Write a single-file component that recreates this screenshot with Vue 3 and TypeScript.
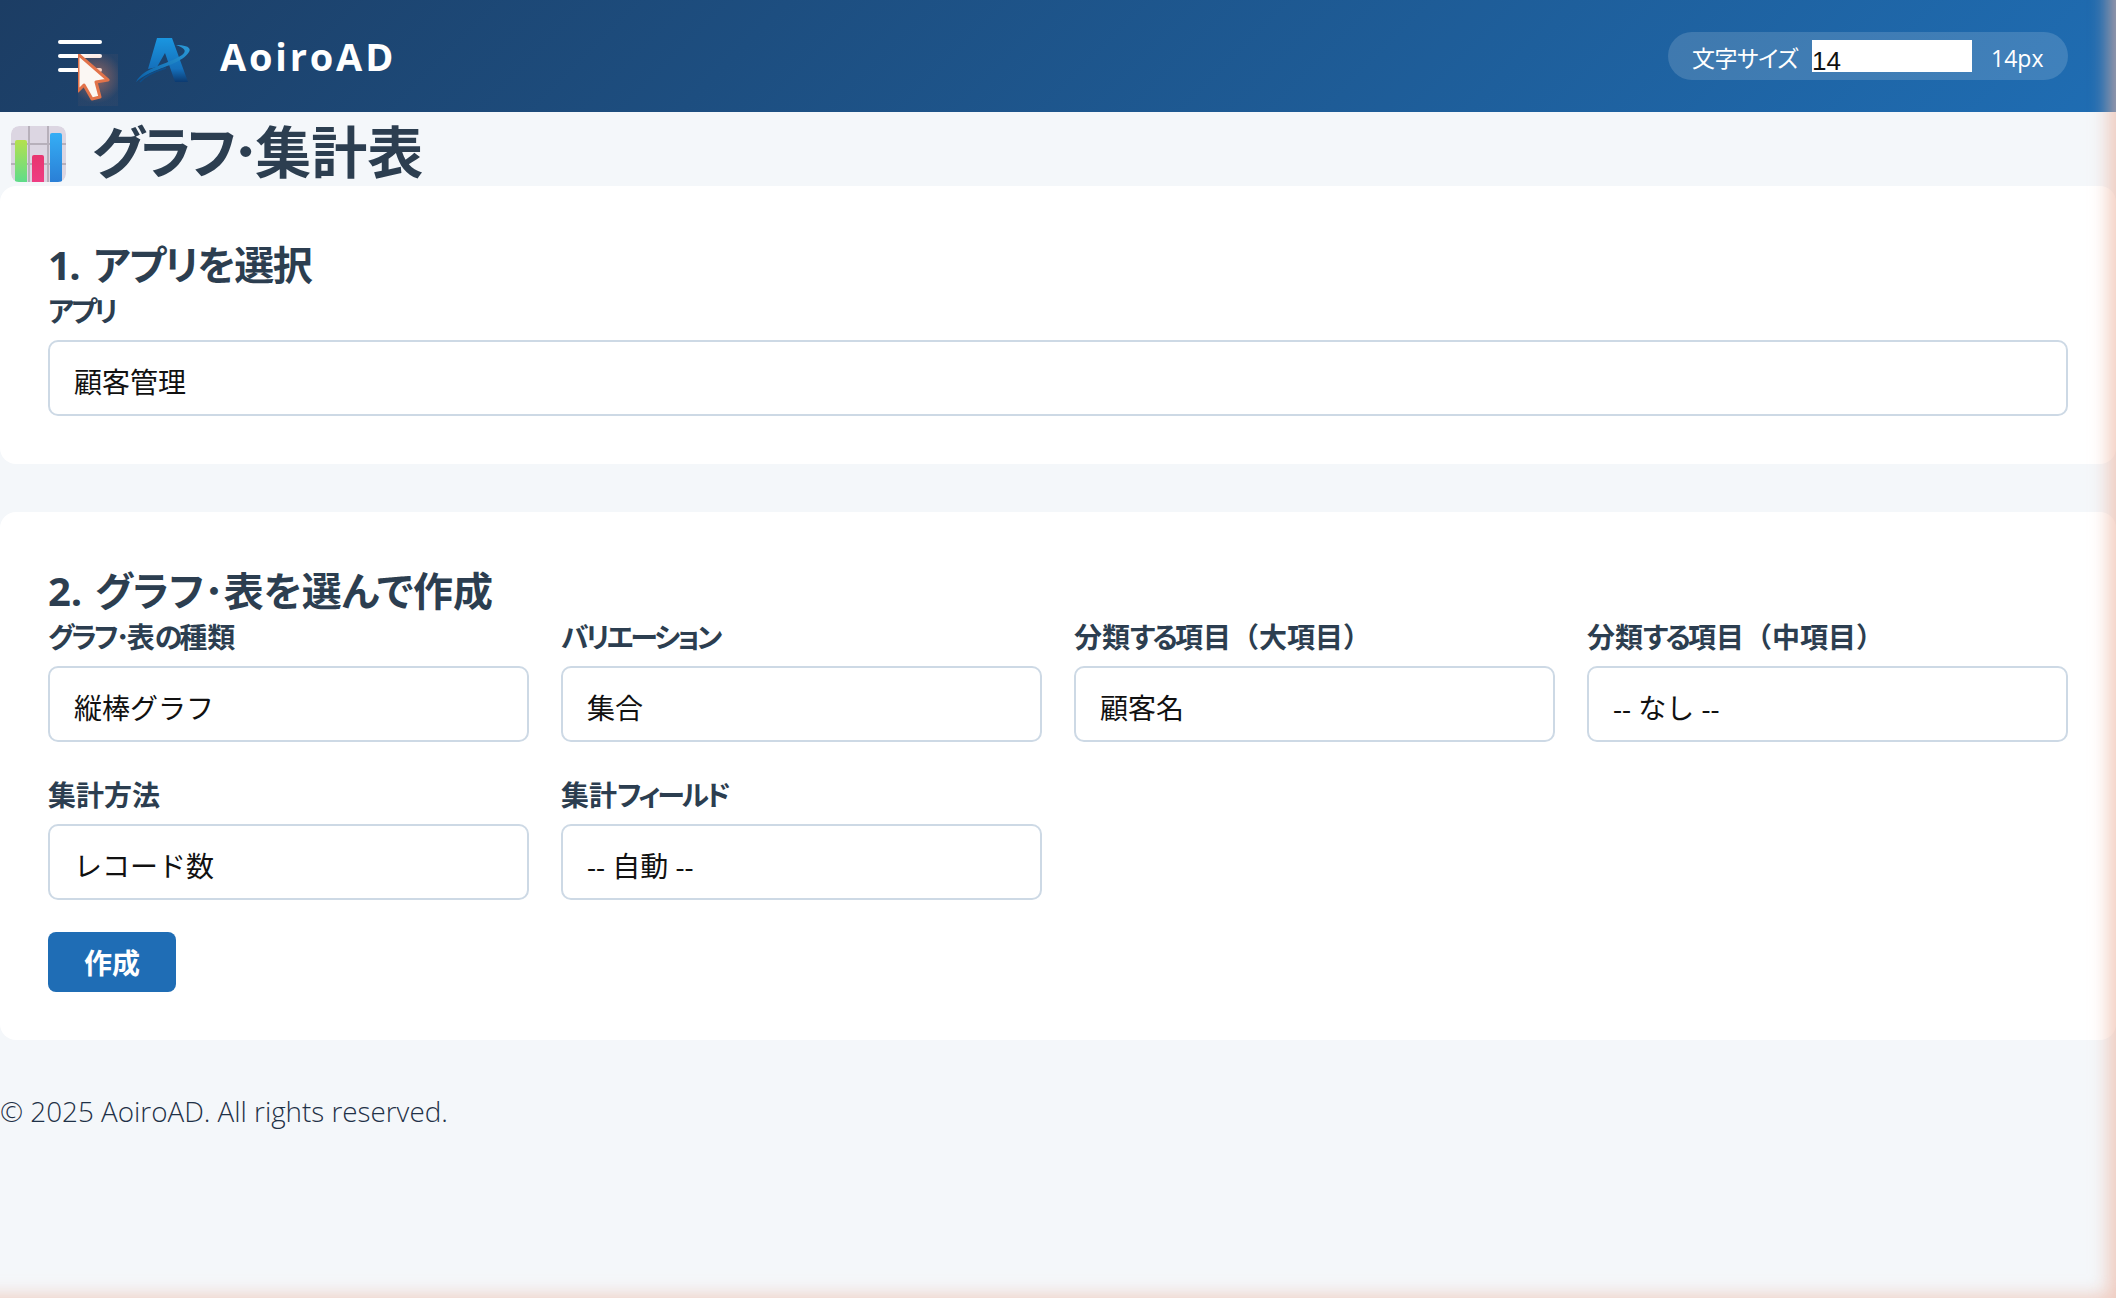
<script setup lang="ts">
/**
 * グラフ・集計表 page: header bar, app picker, chart builder form.
 */
import { ref, reactive } from 'vue'

const fontSize = ref('14')
const appName = ref('顧客管理')

interface Field {
  key: string
  label: string
  value: string
}

const fields = reactive<Field[]>([
  { key: 'type', label: 'グラフ･表の種類', value: '縦棒グラフ' },
  { key: 'variation', label: 'バリエーション', value: '集合' },
  { key: 'major', label: '分類する項目（大項目）', value: '顧客名' },
  { key: 'middle', label: '分類する項目（中項目）', value: '-- なし --' },
  { key: 'method', label: '集計方法', value: 'レコード数' },
  { key: 'target', label: '集計フィールド', value: '-- 自動 --' },
])

// kana sits tighter than kanji in these headings, so split it out into its own runs
function runs(text: string) {
  return (text.match(/[ぁ-んァ-ヶー･]+|[^ぁ-んァ-ヶー･]+/g) ?? []).map((part) => ({
    part,
    kana: /^[ぁ-んァ-ヶー･]/.test(part),
  }))
}
</script>

<template>
  <div class="page">
    <header class="topbar">
      <button class="menu-btn" aria-label="menu">
        <span></span>
        <span></span>
        <span></span>
      </button>
      <svg class="logo" viewBox="0 0 56 46" width="56" height="46">
        <defs>
          <linearGradient id="logoBlue" x1="0" y1="0" x2="0" y2="1">
            <stop offset="0" stop-color="#1a96e0" />
            <stop offset="0.7" stop-color="#1570bb" />
            <stop offset="1" stop-color="#0c3a70" />
          </linearGradient>
          <linearGradient id="logoSwoosh" x1="0" y1="1" x2="1" y2="0">
            <stop offset="0" stop-color="#0b5fa6" />
            <stop offset="1" stop-color="#2a9ad8" />
          </linearGradient>
        </defs>
        <path d="M22 1 H37 L53 45 H40 L30 16 L22 30 L13 32 Z" fill="url(#logoBlue)" />
        <path d="M1 45 C9 30 32 28 47 18 C52 14 50 11 41 8 C50 8 57 10 54 15 C48 25 28 30 15 36 C9 39 4 42 1 45 Z" fill="url(#logoSwoosh)" />
        <path d="M5 45 C11 38 21 34 31 31" fill="none" stroke="#0d4f8c" stroke-width="1.4" />
      </svg>
      <span class="brand">AoiroAD</span>
      <div class="size-pill">
        <span class="size-label">文字サイズ</span>
        <input v-model="fontSize" class="size-input" type="text" />
        <span class="size-value">{{ fontSize }}px</span>
      </div>
    </header>

    <!-- mouse pointer captured in the shot -->
    <div class="pointer">
      <svg viewBox="0 0 40 52" width="40" height="52">
        <path d="M0 0 L30 26 L18 28 L22 43 L14 45 L6 31 L0 37 Z" fill="#fbf7f3" stroke="#e2734a" stroke-width="3" stroke-linejoin="round" />
      </svg>
    </div>

    <div class="title-row">
      <svg class="title-icon" viewBox="0 0 55 56" width="55" height="56">
        <defs>
          <linearGradient id="barGreen" x1="0" y1="0" x2="0" y2="1">
            <stop offset="0" stop-color="#b4e04e" />
            <stop offset="1" stop-color="#5fdc8a" />
          </linearGradient>
          <linearGradient id="barPink" x1="0" y1="0" x2="0" y2="1">
            <stop offset="0" stop-color="#e8356f" />
            <stop offset="1" stop-color="#ee3d83" />
          </linearGradient>
          <linearGradient id="barBlue" x1="0" y1="0" x2="0" y2="1">
            <stop offset="0" stop-color="#35aef5" />
            <stop offset="1" stop-color="#2a7fd6" />
          </linearGradient>
        </defs>
        <rect width="55" height="56" rx="8" fill="#dcd6e2" />
        <path d="M18 0 V56 M37 0 V56 M0 18 H55 M0 38 H55" stroke="#b7b0bb" stroke-width="2" />
        <path d="M4 16 Q4 14 6 14 H14 Q16 14 16 16 V56 H4 Z" fill="url(#barGreen)" />
        <path d="M21 31 Q21 29 23 29 H31 Q33 29 33 31 V56 H21 Z" fill="url(#barPink)" />
        <path d="M39 9 Q39 7 41 7 H49 Q51 7 51 9 V56 H39 Z" fill="url(#barBlue)" />
      </svg>
      <h1 class="title">
        <span v-for="r in runs('グラフ･集計表')" :key="r.part" :class="{ kana: r.kana }">{{ r.part }}</span>
      </h1>
    </div>

    <section class="card">
      <h2 class="card-title tight">1. アプリを選択</h2>
      <label class="field">
        <span class="field-label">
          <span v-for="r in runs('アプリ')" :key="r.part" :class="{ kana: r.kana }">{{ r.part }}</span>
        </span>
        <select v-model="appName" class="field-select">
          <option>顧客管理</option>
        </select>
      </label>
    </section>

    <section class="card">
      <h2 class="card-title">2. グラフ･表を選んで作成</h2>
      <div class="form-grid">
        <label v-for="f in fields" :key="f.key" class="field">
          <span class="field-label">
            <span v-for="r in runs(f.label)" :key="r.part" :class="{ kana: r.kana }">{{ r.part }}</span>
          </span>
          <select v-model="f.value" class="field-select">
            <option>{{ f.value }}</option>
          </select>
        </label>
      </div>
      <button class="create-btn">作成</button>
    </section>

    <footer class="footer">© 2025 AoiroAD. All rights reserved.</footer>

    <div class="edge-tint"></div>
  </div>
</template>

<style scoped>
.page {
  position: relative;
  min-height: 1298px;
  background: #f4f7fa;
  color: #2c3e50;
  font-family: "Open Sans", "Noto Sans CJK JP", sans-serif;
  overflow: hidden;
}

.topbar {
  display: flex;
  align-items: center;
  height: 112px;
  padding: 0 48px 0 58px;
  background: linear-gradient(135deg, #1c3d64 0%, #1f6db3 100%);
  color: #fff;
}

.menu-btn {
  display: flex;
  flex-direction: column;
  gap: 10px;
  width: 44px;
  margin: 0 33px 0 0;
  padding: 0;
  border: none;
  background: none;
}

.menu-btn span {
  display: block;
  height: 4px;
  border-radius: 2px;
  background: #fff;
}

.logo {
  margin: 7px 29px 0 0;
  flex-shrink: 0;
}

.brand {
  font-size: 38px;
  font-weight: 700;
  letter-spacing: 2.8px;
  line-height: 1;
}

.size-pill {
  display: flex;
  align-items: center;
  height: 48px;
  width: 400px;
  margin-left: auto;
  padding: 0 26px 0 24px;
  box-sizing: border-box;
  border-radius: 24px;
  background: rgba(255, 255, 255, 0.15);
  font-size: 23px;
  font-family: "Noto Sans CJK JP", sans-serif;
  font-weight: 400;
}

.size-label {
  margin-top: 2px;
  white-space: nowrap;
  letter-spacing: -0.5px;
  font-feature-settings: "palt";
}

.size-input {
  width: 160px;
  height: 32px;
  margin: 0 19px 0 14px;
  padding: 10px 0 0;
  box-sizing: border-box;
  border: none;
  outline: none;
  background: #fff;
  color: #111;
  font-size: 26px;
  font-family: "Liberation Sans", sans-serif;
  line-height: 24px;
}

.size-value {
  margin-top: 3px;
  font-family: "Open Sans", sans-serif;
  font-weight: 400;
}

.pointer {
  position: absolute;
  left: 78px;
  top: 54px;
  width: 40px;
  height: 52px;
  overflow: hidden;
  background: radial-gradient(circle at 45% 45%, rgba(238, 130, 90, 0.55) 0%, rgba(238, 130, 90, 0.05) 72%);
}

.pointer svg {
  display: block;
}

.title-row {
  display: flex;
  align-items: center;
  gap: 26px;
  height: 74px;
  padding-left: 11px;
}

.title-icon {
  flex-shrink: 0;
  border-radius: 8px;
  margin-top: 10px;
}

.title {
  margin: 0;
  font-size: 56px;
  font-weight: 700;
  line-height: 1;
  font-family: "Noto Sans CJK JP", sans-serif;
}

.title .kana {
  font-feature-settings: "palt";
  letter-spacing: -4.5px;
}

.card {
  margin-bottom: 48px;
  padding: 48px;
  border-radius: 16px;
  background: #fff;
}

.card-title {
  height: 56px;
  margin: 0;
  font-size: 40px;
  font-weight: 700;
  line-height: 62px;
  word-spacing: 3px;
  letter-spacing: -0.2px;
  font-feature-settings: "palt";
}

.card-title.tight {
  letter-spacing: -1.5px;
  word-spacing: 5px;
}

.field {
  display: flex;
  flex-direction: column;
}

.field-label {
  height: 40px;
  margin-bottom: 10px;
  font-size: 28px;
  font-weight: 700;
  line-height: 42px;
  white-space: nowrap;
}

.field-label .kana {
  font-feature-settings: "palt";
  letter-spacing: -3px;
}

.field-select {
  width: 100%;
  height: 76px;
  padding: 7px 24px 0;
  box-sizing: border-box;
  border: 2px solid #cdd9e5;
  border-radius: 10px;
  background: #fff;
  color: #111;
  font-family: "Open Sans", "Noto Sans CJK JP", sans-serif;
  font-size: 28px;
  appearance: none;
}

.form-grid {
  display: grid;
  grid-template-columns: repeat(4, 1fr);
  gap: 32px;
}

.create-btn {
  display: block;
  width: 128px;
  height: 60px;
  margin-top: 32px;
  padding: 0;
  border: none;
  border-radius: 8px;
  background: #1f6db5;
  color: #fff;
  font-family: "Noto Sans CJK JP", sans-serif;
  font-size: 28px;
  font-weight: 700;
}

.footer {
  margin-top: 51px;
  font-size: 27.8px;
  line-height: 40px;
  font-weight: 300;
  color: #1f3147;
}

.edge-tint {
  position: absolute;
  inset: 0;
  pointer-events: none;
  box-shadow: inset -18px -12px 18px -10px rgba(236, 180, 160, 0.65);
}
</style>

<style>
body {
  margin: 0;
  background: #f4f7fa;
}
</style>
